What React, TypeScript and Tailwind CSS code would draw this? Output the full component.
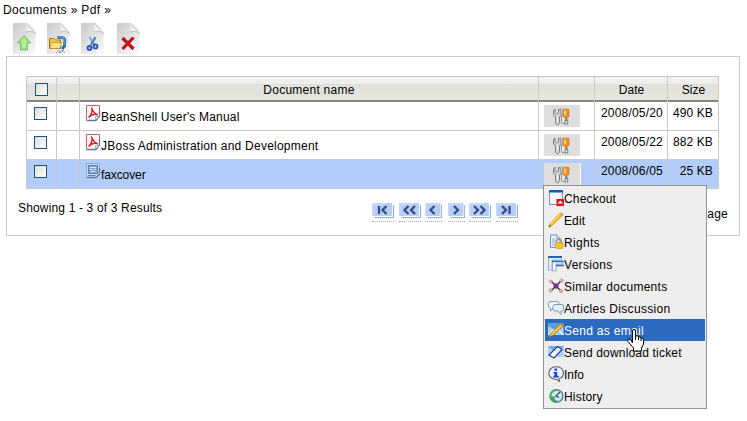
import React from "react";

type IconProps = { className?: string };

function Sheet({ id, children }: { id: string; children: React.ReactNode }) {
  return (
    <svg width="23" height="31" viewBox="0 0 23 31" className="block">
      <defs>
        <linearGradient id={id} x1="0" y1="0" x2="0.8" y2="1">
          <stop offset="0" stopColor="#c9c9c9" />
          <stop offset="0.5" stopColor="#e0e0e0" />
          <stop offset="1" stopColor="#f6f6f6" />
        </linearGradient>
      </defs>
      <path d="M0 0H13L22.500 10V31H0Z" fill={`url(#${id})`} />
      <path d="M12 0C14 3 14 6 13 9C16 8 20 8 22.500 11Z" fill="#f1f1f1" />
      <path d="M12 0C15 1 21 7 22.500 11C20 8 16 8 13 9" fill="none" stroke="#bdbdbd" strokeWidth="1" />
      {children}
    </svg>
  );
}

const Upload = () => (
  <Sheet id="s1">
    <path d="M11 12.500L18 20H14.500V27H7.500V20H4Z" fill="#9adf83" stroke="#7cbb70" />
    <path d="M11 15L14.500 19H13V25H9V19H7.500Z" fill="#b3eb9f" />
  </Sheet>
);

const Archive = () => (
  <Sheet id="s2">
    <path d="M10.500 14.500H15C18 15 18 17 17.500 19V23L15 26" fill="none" stroke="#2f70bd" strokeWidth="3" />
    <path d="M12 14H15C17 15 17 16 17 18V22" fill="none" stroke="#83bdf0" strokeWidth="1" />
    <path d="M2.500 15.500H7L8.500 17H13.500V25.500H2.500Z" fill="#f6c744" stroke="#ac7514" />
    <path d="M4.500 19.500H14.500L13 25.500H3Z" fill="#ffe18a" stroke="#b88220" strokeWidth="0.700" />
    <path d="M9 30L12 27L14 30L17 27M12 30L15 27L18 30" stroke="#4a78ba" strokeDasharray="1.300 1" fill="none" />
  </Sheet>
);

const Cut = () => (
  <Sheet id="s3">
    <path d="M8.500 14L13.500 22" stroke="#75a9df" strokeWidth="2.200" />
    <path d="M14.500 14L10 22" stroke="#4f7fbd" strokeWidth="2.200" />
    <circle cx="8.500" cy="25" r="1.900" fill="none" stroke="#3053b5" strokeWidth="2" />
    <circle cx="14.500" cy="23.500" r="1.900" fill="none" stroke="#3053b5" strokeWidth="2" />
  </Sheet>
);

const Delete = () => (
  <Sheet id="s4">
    <path d="M5.500 15L16.500 26M16.500 14.500L5.500 26" stroke="#bd1218" strokeWidth="3.200" />
  </Sheet>
);

const Pdf = () => (
  <svg width="15" height="17" viewBox="0 0 15 17" className="block">
    <path d="M.5.500H13.500V11L10 15.500H.5Z" fill="#fff" stroke="#c06068" />
    <path d="M13.500 5V11L10 15.500H1" fill="none" stroke="#61759b" strokeWidth="1.300" />
    <path d="M9.500 15V11.500H13" fill="#e8edf8" stroke="#8b99b5" strokeWidth="0.700" />
    <path d="M2.500 12.500C6 9 7 6 5.500 2.500C7 7 9 9 12 10C8 8 5 10 2.500 12.500Z" fill="none" stroke="#d51e25" strokeWidth="1.300" />
  </svg>
);

const Fax = () => (
  <svg width="15" height="17" viewBox="0 0 15 17" className="block">
    <path d="M.5.500H13.500V11L10 14.500H.5Z" fill="#c7daf2" stroke="#8ca8cc" />
    <path d="M13.500 5V11L10 14.500H1" fill="none" stroke="#647da0" strokeWidth="1.300" />
    <path d="M2.500 2.500H11.500V10.500H2.500Z" fill="#83a8d8" stroke="#587daf" />
    <path d="M4 4.500H10M4 6.500H6M8 6.500H10M5 8.500H9" stroke="#d8e7f8" />
    <path d="M2 12.500H9.500" stroke="#5c7ba4" />
  </svg>
);

const Tools = () => (
  <svg width="18" height="18" viewBox="0 0 18 18" className="block">
    <path d="M7 1H8.500L10 3V7L8.500 8V14L10 16L12 15" fill="#eee" stroke="#858585" strokeWidth="0.900" />
    <path d="M2 1V4.500L3.500 6L5.500 5V1L8 3V7.500L6.500 9V14.500C6.500 17.500 2.500 17.500 2.500 14.500V9L.5 7V3Z" fill="#cfcfcf" stroke="#777" strokeWidth="0.900" />
    <path d="M4.500 8V14" stroke="#f3f3f3" />
    <path d="M10 1.500Q13 .5 16 1.500V8.500Q15.500 9.500 13 9.500Q10.500 9.500 10 8.500Z" fill="#f18b20" stroke="#ce7620" strokeWidth="0.700" />
    <path d="M12 2.500V7.500" stroke="#ffd178" strokeWidth="2.200" />
    <path d="M13.300 10V13" stroke="#857469" strokeWidth="2" />
    <path d="M12 12.500H14.700V16H12Z" fill="#eee" stroke="#6e6e6e" strokeWidth="0.900" />
  </svg>
);

function MenuSvg({ children }: { children: React.ReactNode }) {
  return (
    <svg width="16" height="16" viewBox="0 0 16 16" className="block shrink-0">
      {children}
    </svg>
  );
}

const Checkout = () => (
  <MenuSvg>
    <path d="M1.500 1H14.500V14.500H1.500Z" fill="#f4f7ff" stroke="#7594c5" />
    <path d="M1 0H15V2.500H1Z" fill="#1855b5" />
    <path d="M8.500 9H16V16H8.500Z" fill="#dc1317" />
    <path d="M12.250 10.500L15 13.500H9.500Z" fill="#fff" />
  </MenuSvg>
);
const Edit = () => (
  <MenuSvg>
    <path d="M.8 15.200L2.200 11.500L12 1L15 2.800L4.200 13.500Z" fill="#f3b719" stroke="#c48e2a" strokeWidth="0.700" />
    <path d="M3 12L12.500 2" stroke="#ffdf55" strokeWidth="1.200" />
    <path d="M.8 15.200L1.500 13L3 14.200Z" fill="#443b37" />
    <path d="M12.500 1L15 2.800" stroke="#d68c70" strokeWidth="1.500" />
  </MenuSvg>
);
const Rights = () => (
  <MenuSvg>
    <path d="M2.500 1H8.500L12 4.500V13.500H2.500Z" fill="#f4f8ff" stroke="#668cb9" />
    <path d="M8.500 1V4.500H12M4 5H7M4 7H9M4 9H7M4 11H7" fill="none" stroke="#7ba2cd" strokeWidth="0.900" />
    <path d="M8.500 9V7.500C8.500 4.500 13.500 4.500 13.500 7.500V9" fill="none" stroke="#a39a77" strokeWidth="1.400" />
    <rect x="7.500" y="8.500" width="7.500" height="6" rx="1" fill="#f4c51e" stroke="#c19a20" strokeWidth="0.700" />
  </MenuSvg>
);
const Versions = () => (
  <MenuSvg>
    <path d="M.5 1H13.500V4H4V14H.5Z" fill="#e8f0fd" stroke="#8ba5cb" strokeWidth="0.900" />
    <path d="M0 1H14" stroke="#2460b4" strokeWidth="2" />
    <path d="M4.500 5.500H15V8H8V15H4.500Z" fill="#f9fbff" stroke="#8da5ca" strokeWidth="0.900" />
    <path d="M4 5.500H15.500M8 9.500H16" stroke="#2e68b8" strokeWidth="1.500" />
  </MenuSvg>
);
const Similar = () => (
  <MenuSvg>
    <path d="M3 3L13 13M14 2L3 13" stroke="#292638" strokeWidth="1.300" />
    <g fill="#dbb0b0" stroke="#b58a8c" strokeWidth="0.600">
      <circle cx="3" cy="3.500" r="1.500" />
      <circle cx="13.500" cy="2.500" r="1.700" />
      <circle cx="2.800" cy="12.500" r="1.700" />
      <circle cx="13" cy="13" r="1.800" />
    </g>
    <circle cx="8" cy="8" r="2.200" fill="#9429bd" stroke="#591a7b" strokeWidth="0.800" />
  </MenuSvg>
);
const Discussion = () => (
  <MenuSvg>
    <path d="M2 1.500H9Q11 1.500 11 3.500V6Q11 8 9 8H5L2.500 11V8Q.5 8 .5 6V3.500Q.5 1.500 2 1.500Z" fill="#f5faff" stroke="#7d9dbd" />
    <path d="M7 4.500H14Q15.500 4.500 15.500 6V9.500Q15.500 11 14 11H13V14.500L10 11H7Q5 11 5 9.500V6.500Q5 4.500 7 4.500Z" fill="#e6f2ff" stroke="#7899bb" />
  </MenuSvg>
);
const Mail = () => (
  <MenuSvg>
    <path d="M0 1.500H15.500V13H0Z" fill="#a9d3f4" />
    <path d="M0 1.500H15V5L8 9L0 4Z" fill="#5c9fd9" />
    <path d="M0 13L6 7.500M10 7.500L16 13" stroke="#eef6ff" strokeWidth="1.200" />
    <path d="M1 15L2.500 11.500L12.500 2L15.500 4L5 13.500Z" fill="#f5b523" stroke="#8e6a32" strokeWidth="0.600" />
    <path d="M4 12L13 3" stroke="#ffe379" />
  </MenuSvg>
);
const Ticket = () => (
  <MenuSvg>
    <path d="M0 2H16V13H0Z" fill="#a8d1ef" />
    <path d="M0 2H16L8 9Z" fill="#6baade" />
    <path d="M1 11L9.500 2.500L14 5.500L6 14Z" fill="#f7faff" stroke="#2438a5" strokeWidth="1.100" />
  </MenuSvg>
);
const Info = () => (
  <MenuSvg>
    <path d="M8 .8C17 .8 17.500 10.500 11 12.700L11.500 15.300L8 13.300C-1.500 13.300-1.500.8 8 .8Z" fill="#eff3ff" stroke="#5b5d68" strokeWidth="1.100" />
    <path d="M6.500 2.500H9.200V4.700H6.500ZM5.500 6H9.200V9.800H10.700V11.500H5.300V9.800H6.500V7.500H5.500Z" fill="#183fd0" />
  </MenuSvg>
);
const History = () => (
  <MenuSvg>
    <path d="M0 0H16V16H0Z" fill="#e3f2ee" />
    <circle cx="8.500" cy="8" r="6.300" fill="#d4e6f4" stroke="#64868f" strokeWidth="1.600" />
    <path d="M8 2A6 6 0 0 0 2.500 9" fill="none" stroke="#57ac61" strokeWidth="2" />
    <path d="M1 8.500H8L6 10.500Q8 13 11 13Q5 16 3 11Z" fill="#3ca346" />
    <path d="M12 4L8 8L11 9.500" fill="none" stroke="#395769" strokeWidth="1.300" />
  </MenuSvg>
);

const menu: { label: string; icon: () => React.JSX.Element; track: string; active?: boolean }[] = [
  { label: "Checkout", icon: Checkout, track: "tracking-[0.18px]" },
  { label: "Edit", icon: Edit, track: "tracking-[0.1px]" },
  { label: "Rights", icon: Rights, track: "tracking-[0.3px]" },
  { label: "Versions", icon: Versions, track: "tracking-[0.3px]" },
  { label: "Similar documents", icon: Similar, track: "tracking-[0.28px]" },
  { label: "Articles Discussion", icon: Discussion, track: "tracking-[0.3px]" },
  { label: "Send as email", icon: Mail, track: "tracking-[0.3px]", active: true },
  { label: "Send download ticket", icon: Ticket, track: "tracking-[0.18px]" },
  { label: "Info", icon: Info, track: "tracking-[0px]" },
  { label: "History", icon: History, track: "tracking-[0.2px]" },
];

const rows = [
  { name: "BeanShell User's Manual", icon: Pdf, date: "2008/05/20", size: "490 KB", track: "tracking-[0.18px]" },
  { name: "JBoss Administration and Development", icon: Pdf, date: "2008/05/22", size: "882 KB", track: "tracking-[0.24px]" },
  { name: "faxcover", icon: Fax, date: "2008/06/05", size: "25 KB", track: "tracking-[-0.1px]", selected: true },
];

const grid = "grid grid-cols-[30px_23px_459px_56px_73px_51px]";

function Box({ className = "" }: IconProps) {
  return <span className={`block size-[13px] border border-[#24527f] bg-linear-to-br from-[#dcdcd7] to-white ${className}`} />;
}

const pager = [
  { w: "w-[22px]", gap: "mr-[5px]", d: "M7 3V11M14.500 3L10.500 7L14.500 11" },
  { w: "w-[22px]", gap: "mr-[4px]", d: "M9.500 3L5.500 7L9.500 11M16 3L12 7L16 11" },
  { w: "w-[17px]", gap: "mr-[6px]", d: "M9.500 3L5.500 7L9.500 11" },
  { w: "w-[17px]", gap: "mr-[4px]", d: "M6 3L10 7L6 11" },
  { w: "w-[22px]", gap: "mr-[5px]", d: "M5 3L9 7L5 11M11.500 3L15.500 7L11.500 11" },
  { w: "w-[22px]", gap: "", d: "M6 3L10 7L6 11M13.500 3V11" },
];

export default function App() {
  return (
    <div className="relative h-[421px] w-[747px] overflow-hidden bg-white font-['Liberation_Sans',Arial,sans-serif] text-[12px] leading-[14px] text-black">
      <div className="pt-[3px] pl-[3px] tracking-[0.36px]">Documents » Pdf »</div>
      <div className="flex pt-[6px] pl-[13px]">
        <span className="mr-[11px]"><Upload /></span>
        <span className="mr-[11px]"><Archive /></span>
        <span className="mr-[13px]"><Cut /></span>
        <Delete />
      </div>

      <div className="mt-[2px] ml-[6px] h-[180px] w-[734px] border border-[#c8c8c8] pt-[19px] pl-[19px]">
        <div className="w-[693px] border-l border-[#c8c8c8]">
          <div className={`${grid} h-[26px] border-t border-b-2 border-t-[#c8c8c8] border-b-[#858585] bg-[linear-gradient(#f3f3f3_0%,#ededeb_28%,#e1e1d9_31%,#e5e5df_100%)] text-center leading-[24px]`}>
            <div className="border-r border-[#cacaca] pt-[6px] pl-[8px]"><Box /></div>
            <div className="border-r border-[#cacaca]" />
            <div className="border-r border-[#cacaca] pt-px tracking-[0.25px]">Document name</div>
            <div className="border-r border-[#cacaca]" />
            <div className="border-r border-[#cacaca] pt-px pl-px">Date</div>
            <div className="border-r border-[#cacaca] pt-px pl-px">Size</div>
          </div>
          {rows.map((r) => {
            const Icon = r.icon;
            return (
              <div key={r.name} className={`${grid} h-[29px] border-b border-[#c8c8c8] ${r.selected ? "bg-[#b2cdf9]" : "bg-white"}`}>
                <div className="border-r border-[#c8c8c8] pt-[5px] pl-[7px]"><Box /></div>
                <div className="border-r border-[#c8c8c8]" />
                <div className="flex border-r border-[#c8c8c8] pt-[3px] pl-[6px]">
                  <Icon />
                  <span className={`pt-[5px] ${r.track}`}>{r.name}</span>
                </div>
                <div className="border-r border-[#c8c8c8] pt-[3px] pl-[5px]">
                  <div className={`flex h-[22px] justify-center bg-[#dedede] pt-[3px] ${r.selected ? "w-[37px] border-r border-white" : "w-[36px]"}`}><Tools /></div>
                </div>
                <div className="border-r border-[#c8c8c8] pt-[4px] pr-[4px] text-right tracking-[0.2px]">{r.date}</div>
                <div className="border-r border-[#c8c8c8] pt-[4px] pr-[5px] text-right tracking-[0.12px]">{r.size}</div>
              </div>
            );
          })}
        </div>

        <div className="flex">
          <div className="-ml-[8px] w-[354px] pt-[12px] tracking-[0.16px]">Showing 1 - 3 of 3 Results</div>
          <div className="flex pt-[14px]">
            {pager.map((p, i) => (
              <div key={i} className={`${p.w} ${p.gap} h-[19px] border-b border-dotted border-[#aaa]`}>
                <svg className="block h-[15px] w-full">
                  <rect x="2" y="2" width="100%" height="13" rx="1" fill="#8db1cf" />
                  <rect x="0" y="0" width="95%" height="14" fill="#fff" />
                  <rect x="0" y="0" width="91%" height="13" rx="1" fill="#b6cdf8" />
                  <path d="M1 12V1H15" fill="none" stroke="#d3e1fb" />
                  <path d={p.d} fill="none" stroke="#354d81" strokeWidth="2.300" />
                </svg>
              </div>
            ))}
          </div>
          <div className="ml-auto pt-[18px] pr-[11px] tracking-[0.2px]">page</div>
        </div>
      </div>

      <div className="absolute top-[185px] left-[543px] h-[224px] w-[164px] border border-[#929292] bg-[#eee] p-px">
        {menu.map((m) => {
          const Icon = m.icon;
          return (
            <div key={m.label} className={`flex h-[22px] items-center pl-[3px] whitespace-nowrap ${m.active ? "bg-[#2a6ac1] text-white" : ""}`}>
              <Icon />
              <span className={`pt-px ${m.track}`}>{m.label}</span>
            </div>
          );
        })}
      </div>

      <svg className="absolute top-[329px] left-[627px]" width="18" height="23" viewBox="0 0 18 23">
        <path d="M5.500 14V2Q5.500.5 7 .5T8.500 2V7Q11 6 11.500 8Q14 7 14 9Q16.500 8.500 16.500 11V15L14.500 19V22H6.500V19L1 12.500Q0 10.500 2 10Q4 10 5.500 14Z" fill="#fff" stroke="#000" />
        <path d="M8.500 6V11M11.500 8V11M14 9V12" stroke="#000" />
      </svg>
    </div>
  );
}
